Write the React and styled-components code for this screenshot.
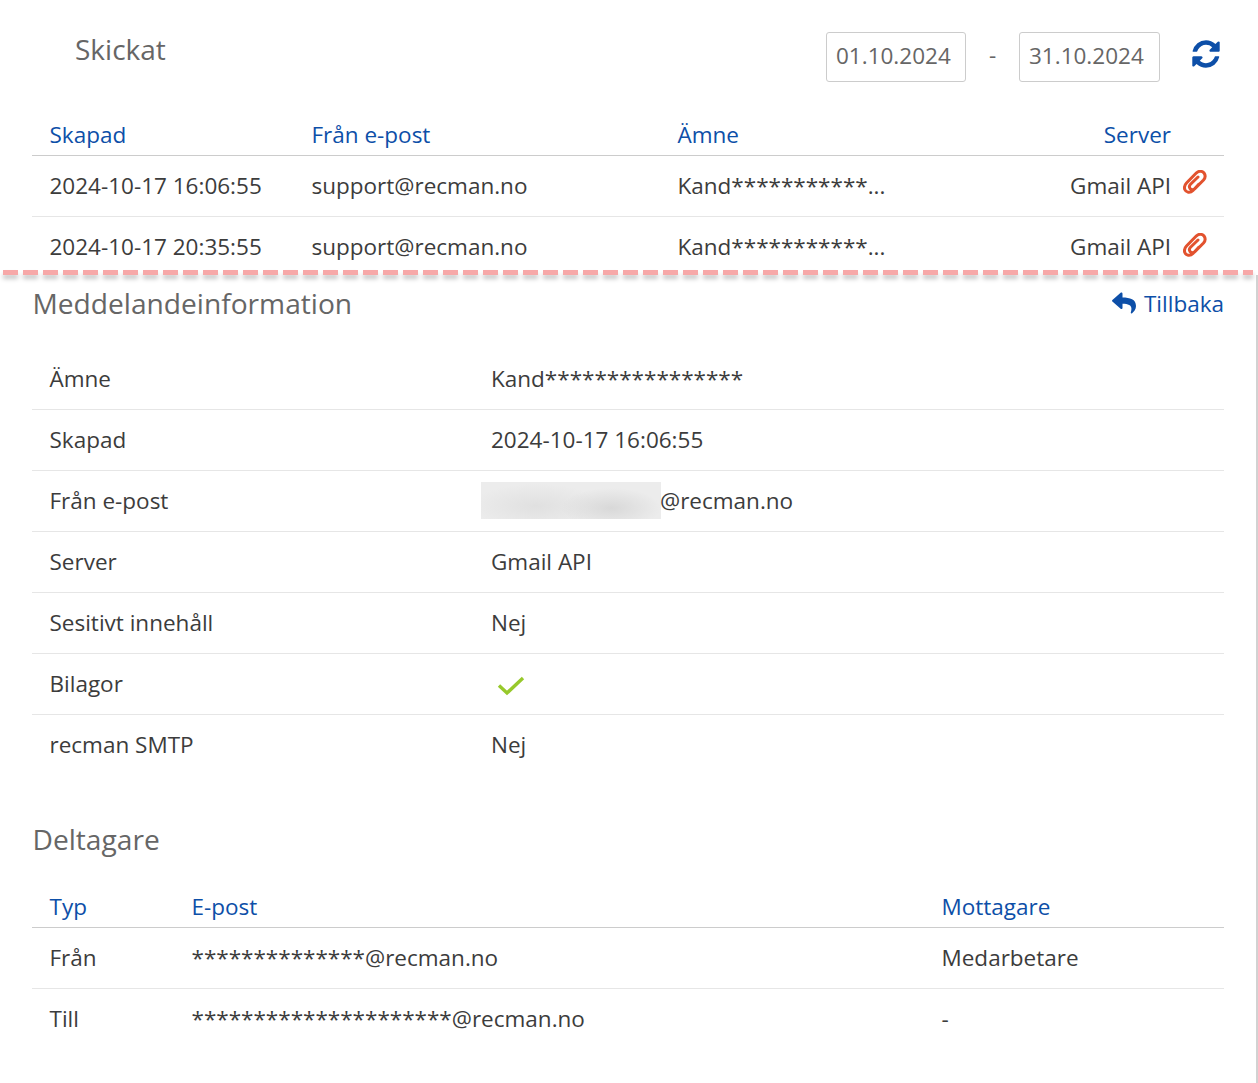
import React from 'react';
import styled, { createGlobalStyle } from 'styled-components';
import { FaReply } from 'react-icons/fa';

const GlobalStyle = createGlobalStyle`
    html, body {
        margin: 0;
        padding: 0;
        background: #fff;
    }
    body {
        font-family: "Open Sans", "Liberation Sans", sans-serif;
        font-size: 22.5px;
        color: #3c3c3c;
    }
`;

const Page = styled.div`
    width: 1258px;
    height: 1083px;
    overflow: hidden;
    background: #fff;
`;

const TopPanel = styled.section`
    height: 270px;
    overflow: hidden;
    padding: 0 34px 0 32px;
    box-sizing: border-box;
`;

const Toolbar = styled.div`
    display: flex;
    align-items: flex-start;
    height: 118px;
    padding-top: 32px;
    box-sizing: border-box;
`;

const Title = styled.h2`
    flex: 1;
    margin: -1px 0 0;
    padding-left: 43px;
    font-size: 28px;
    line-height: 36px;
    font-weight: 400;
    color: #666;
`;

const DateBox = styled.div`
    width: ${({ w }) => w}px;
    height: 50px;
    box-sizing: border-box;
    border: 1px solid #ccc;
    border-radius: 3px;
    padding-left: 9px;
    line-height: 46px;
    color: #666;
`;

const Dash = styled.span`
    width: 53px;
    text-align: center;
    line-height: 46px;
    color: #666;
`;

const RefreshIcon = styled.svg`
    display: block;
    width: 32px;
    height: 32px;
    margin: 6px 2px 0 30px;
    fill: #0d4fa8;
`;

const HeadRow = styled.div`
    display: grid;
    grid-template-columns: ${({ cols }) => cols};
    align-items: center;
    height: 38px;
    box-sizing: border-box;
    padding: 0 0 4px 17.5px;
    border-bottom: 1px solid #ccc;
    color: #0d4fa8;
`;

const Row = styled.div`
    display: grid;
    grid-template-columns: ${({ cols }) => cols};
    align-items: center;
    height: 61px;
    box-sizing: border-box;
    padding: 0 0 2px 17.5px;
    border-bottom: 1px solid ${({ last }) => (last ? 'transparent' : '#e6e6e6')};
`;

const ServerCell = styled.div`
    display: flex;
    justify-content: flex-end;
    align-items: center;
    align-self: stretch;
    padding-right: 53px;
    position: relative;
`;

const Clip = styled.svg`
    position: absolute;
    right: 17px;
    top: ${({ top }) => top}px;
    width: 24px;
    height: 24px;
    fill: none;
    stroke: #e2522e;
    stroke-width: 3;
    stroke-linecap: round;
`;

const Divider = styled.div`
    height: 5px;
    margin: 0 5px 0 3px;
    background: repeating-linear-gradient(to right, #f7a8a8 0 15px, transparent 15px 20px);
    filter: drop-shadow(0 4px 2px rgba(0, 0, 0, 0.22));
`;

const DetailPanel = styled.section`
    height: 808px;
    padding: 0 32px;
    box-sizing: border-box;
    border-right: 2px solid #d2d2d2;
`;

const SectionHead = styled.div`
    display: flex;
    justify-content: space-between;
    align-items: center;
    height: 59px;
    box-sizing: border-box;
    padding-bottom: 4px;
`;

const SectionTitle = styled.h3`
    margin: 0 0 0 0.5px;
    font-size: 28.15px;
    font-weight: 400;
    color: #666;
`;

const BackLink = styled.a`
    display: flex;
    align-items: center;
    gap: 8px;
    margin-top: 1px;
    color: #0d4fa8;
    svg {
        font-size: 24px;
    }
`;

const InfoTable = styled.div`
    padding-top: 15px;
`;

const BlurValue = styled.div`
    display: flex;
    align-items: center;
`;

const Blurred = styled.span`
    display: block;
    width: 180px;
    height: 37px;
    margin-left: -10px;
    margin-right: -1px;
    background: radial-gradient(ellipse 50px 20px at 130px 26px, #d8d8d8, transparent),
        radial-gradient(ellipse 65px 22px at 55px 24px, #e0e0e0, transparent),
        #ececec;
`;

const Check = styled.svg`
    display: block;
    width: 28px;
    height: 22px;
    margin: 3px 0 0 6px;
    fill: none;
    stroke: #97c92b;
    stroke-width: 3.4;
`;

const ParticipantsTitle = styled(SectionTitle)`
    margin-top: 41px;
    line-height: 44px;
`;

const Participants = styled.div`
    padding-top: 29px;
`;

const paperclip = 'M16 14 10 20.5C7 23.5 3 22.5 1.8 19.5 1 17 1.6 15 3.5 13L13.5 2.8C16 .5 19.5 1 21 3 22.8 5.5 22.2 8 20.5 10L11.5 19C10 20 8 19.8 7 18.5 6 17 6.3 15.5 7.5 14.3L15 7';
const refresh = 'M1639 1056q0 5-1 7-64 268-268 434.5t-478 166.5q-146 0-282.5-55t-243.5-157l-129 129q-19 19-45 19t-45-19-19-45v-448q0-26 19-45t45-19h448q26 0 45 19t19 45-19 45l-137 137q71 66 161 102t187 36q134 0 250-65t186-179q11-17 53-117 8-23 30-23h192q13 0 22.5 9.5t9.5 22.5zm25-800v448q0 26-19 45t-45 19h-448q-26 0-45-19t-19-45 19-45l138-138q-148-137-349-137-134 0-250 65t-186 179q-11 17-53 117-8 23-30 23h-199q-13 0-22.5-9.5t-9.5-22.5v-7q65-268 270-434.5t480-166.5q146 0 284 55.5t245 156.5l130-129q19-19 45-19t45 19 19 45z';

const sent = [
    { date: '2024-10-17 16:06:55', top: 14 },
    { date: '2024-10-17 20:35:55', top: 16 },
];

const sentCols = '262px 366px 1fr 300px';
const infoCols = '441.5px 1fr';
const peopleCols = '142px 750px 1fr';

const info = [
    ['Ämne', 'Kand****************'],
    ['Skapad', '2024-10-17 16:06:55'],
    ['Från e-post', <BlurValue><Blurred />@recman.no</BlurValue>],
    ['Server', 'Gmail API'],
    ['Sesitivt innehåll', 'Nej'],
    ['Bilagor', <Check viewBox="0 0 28 22"><path d="M2 11.5 10 19 26 4" /></Check>],
    ['recman SMTP', 'Nej'],
];

const App = () => (
    <Page>
        <GlobalStyle />
        <TopPanel>
            <Toolbar>
                <Title>Skickat</Title>
                <DateBox w={140}>01.10.2024</DateBox>
                <Dash>-</Dash>
                <DateBox w={141}>31.10.2024</DateBox>
                <RefreshIcon viewBox="0 0 1792 1792"><path d={refresh} /></RefreshIcon>
            </Toolbar>
            <HeadRow cols={sentCols}>
                <div>Skapad</div>
                <div>Från e-post</div>
                <div>Ämne</div>
                <ServerCell>Server</ServerCell>
            </HeadRow>
            {sent.map((row) => (
                <Row cols={sentCols} key={row.date}>
                    <div>{row.date}</div>
                    <div>support@recman.no</div>
                    <div>Kand***********...</div>
                    <ServerCell>
                        Gmail API
                        <Clip viewBox="0 0 24 24" top={row.top}><path d={paperclip} /></Clip>
                    </ServerCell>
                </Row>
            ))}
        </TopPanel>
        <Divider />
        <DetailPanel>
            <SectionHead>
                <SectionTitle>Meddelandeinformation</SectionTitle>
                <BackLink><FaReply />Tillbaka</BackLink>
            </SectionHead>
            <InfoTable>
                {info.map(([label, value], i) => (
                    <Row cols={infoCols} key={label} last={i === info.length - 1}>
                        <div>{label}</div>
                        <div>{value}</div>
                    </Row>
                ))}
            </InfoTable>
            <ParticipantsTitle>Deltagare</ParticipantsTitle>
            <Participants>
                <HeadRow cols={peopleCols}>
                    <div>Typ</div>
                    <div>E-post</div>
                    <div>Mottagare</div>
                </HeadRow>
                <Row cols={peopleCols}>
                    <div>Från</div>
                    <div>**************@recman.no</div>
                    <div>Medarbetare</div>
                </Row>
                <Row cols={peopleCols} last>
                    <div>Till</div>
                    <div>*********************@recman.no</div>
                    <div>-</div>
                </Row>
            </Participants>
        </DetailPanel>
    </Page>
);

export default App;
